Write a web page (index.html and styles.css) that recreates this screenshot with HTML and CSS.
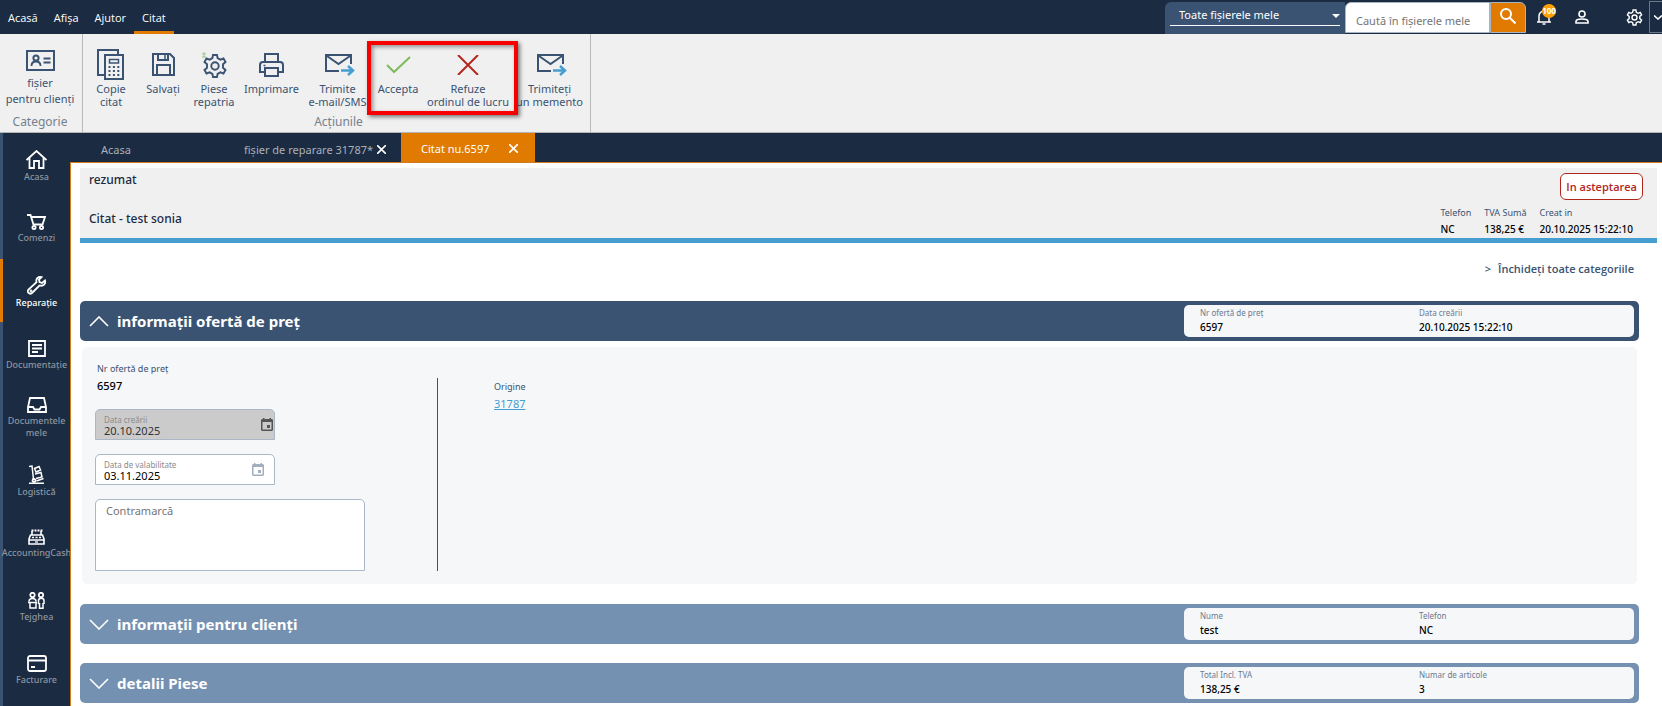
FILE: index.html
```html
<!DOCTYPE html>
<html lang="ro">
<head>
    <meta charset="UTF-8">
    <meta name="viewport" content="width=device-width, initial-scale=1.0">
    <title>Citat nu.6597</title>
    <link rel="stylesheet" href="styles.css">
</head>
<body>

<header class="topbar">
    <nav class="menu">
        <a href="#">Acasă</a>
        <a href="#">Afişa</a>
        <a href="#">Ajutor</a>
        <a href="#" class="current">Citat</a>
    </nav>
    <form class="search">
        <div class="scope">
            <select aria-label="Domeniu">
                <option>Toate fişierele mele</option>
            </select>
            <svg width="8" height="4" viewBox="0 0 8 4"><path d="M0 0h8l-4 4z" fill="#fff"/></svg>
        </div>
        <input class="searchText" type="text" placeholder="Caută în fişierele mele" aria-label="Caută">
        <button class="searchButton" type="button" aria-label="Caută">
            <svg width="18" height="18" viewBox="0 0 18 18" fill="none" stroke="#fff" stroke-width="2"><circle cx="7" cy="7" r="5"/><path d="M10.500 10.500l6 6"/></svg>
        </button>
    </form>
    <div class="tools">
        <button type="button" class="bell" aria-label="Notificări">
            <svg width="16" height="18" viewBox="0 0 16 18" fill="none" stroke="#fff" stroke-width="1.500"><path d="M1 14h14M3 14V8a5 5 0 0 1 10 0v6M8 3V1M6.500 16h3"/></svg>
            <span class="badge">100</span>
        </button>
        <button type="button" class="user" aria-label="Cont">
            <svg width="14" height="14" viewBox="0 0 14 14" fill="none" stroke="#fff" stroke-width="1.600"><circle cx="7" cy="4" r="3"/><path d="M1 13v-1.500C1 10 4 9 7 9s6 1 6 2.500V13z"/></svg>
        </button>
        <button type="button" class="gear" aria-label="Setări">
            <svg width="17" height="17" viewBox="0 0 24 24" fill="none" stroke="#fff" stroke-width="2"><circle cx="12" cy="12" r="3.500"/><path d="M10 1.500h4l.6 3.200 2.400 1.400 3-1.200 2 3.500-2.500 2.100v3l2.500 2.100-2 3.500-3-1.200-2.400 1.400-.6 3.200h-4l-.6-3.200L7 17.900l-3 1.200-2-3.500 2.500-2.100v-3L2 8.400l2-3.500 3 1.200 2.400-1.400z"/></svg>
        </button>
        <button type="button" class="more" aria-label="Mai mult">
            <svg width="8" height="5" viewBox="0 0 8 5" fill="none" stroke="#fff" stroke-width="1.600"><path d="M0 .5l4 3.500 4-3.500"/></svg>
        </button>
    </div>
</header>

<section class="ribbon">
    <div class="group categoryGroup">
        <button type="button" class="action">
            <svg width="29" height="21" viewBox="0 0 29 21" fill="none" stroke="#3a5372" stroke-width="2"><path d="M1 1h27v19H1z"/><circle cx="10" cy="8" r="2.600"/><path d="M5.500 16c0-3 1.500-4.500 4.500-4.500s4.500 1.500 4.500 4.500M17.500 8.500h7M17.500 12.500h7" stroke-width="1.800"/></svg>
            <span>fişier<br>pentru clienţi</span>
        </button>
        <div class="groupName">Categorie</div>
    </div>
    <div class="group actionsGroup">
        <div class="actions">
            <button type="button" class="action">
                <svg width="28" height="31" viewBox="0 0 28 31" fill="none" stroke="#3a5372" stroke-width="2"><path d="M7 26H1V1h20v4M8 6h18v24H8z"/><path d="M12.500 10.500h9v3.500h-9z" stroke-width="1.500"/><path d="M11.500 18h11M11.500 22h11M11.500 26h11" stroke-dasharray="2 2.400"/></svg>
                <span>Copie<br>citat</span>
            </button>
            <button type="button" class="action">
                <svg width="23" height="23" viewBox="0 0 23 23" fill="none" stroke="#3a5372" stroke-width="2"><path d="M1 1h17l4 4v17H1zM6 1v6h10V1M5 22V12h13v10"/><path d="M13 2v4" stroke-width="1.500"/></svg>
                <span>Salvaţi</span>
            </button>
            <button type="button" class="action">
                <svg width="26" height="26" viewBox="0 0 26 26" fill="none" stroke="#3a5372" stroke-width="1.900"><circle cx="14" cy="14" r="3.700"/><path d="M12 3h4l.6 3.200 2.700 1.500 3.200-1.200 2 3.500-2.500 2.200v3.600l2.500 2.200-2 3.500-3.200-1.200-2.700 1.500L16 25h-4l-.6-3.200-2.700-1.500-3.200 1.200-2-3.500L6 15.800v-3.600L3.500 10l2-3.500 3.200 1.200 2.700-1.500z"/><path d="M3 5V1M1 2.500L3 .7l2 1.800M1 5h4" stroke="#8cc67c" stroke-width="1"/></svg>
                <span>Piese<br>repatria</span>
            </button>
            <button type="button" class="action">
                <svg width="25" height="24" viewBox="0 0 25 24" fill="none" stroke="#3a5372" stroke-width="2"><path d="M6 9V1h13v8M6 19H1v-7c0-2 1-3 3-3h17c2 0 3 1 3 3v7h-5M6 15h13v8H6z"/><path d="M4.500 12.500h2" stroke-width="1.500"/></svg>
                <span>Imprimare</span>
            </button>
            <button type="button" class="action">
                <svg width="34" height="22" viewBox="-4 0 34 22" fill="none" stroke="#3a5372" stroke-width="2"><path d="M14 17H1V1h25v9M2 2l11.500 8L25 2"/><path d="M16 16.500h11M23 12l5 4.500-5 4.500" stroke="#469dcf" stroke-width="2.500"/></svg>
                <span>Trimite<br>e-mail/SMS</span>
            </button>
            <button type="button" class="action">
                <svg width="25" height="18" viewBox="0 0 25 18" fill="none" stroke="#7fba5c" stroke-width="2"><path d="M1 9l7 7L24 1"/></svg>
                <span>Accepta</span>
            </button>
            <button type="button" class="action">
                <svg width="22" height="20" viewBox="0 0 22 20" fill="none" stroke="#b3261e" stroke-width="2"><path d="M1 0l20 20M21 0L1 20"/></svg>
                <span>Refuze<br>ordinul de lucru</span>
            </button>
            <button type="button" class="action">
                <svg width="34" height="22" viewBox="-4 0 34 22" fill="none" stroke="#3a5372" stroke-width="2"><path d="M14 17H1V1h25v9M2 2l11.500 8L25 2"/><path d="M16 16.500h11M23 12l5 4.500-5 4.500" stroke="#469dcf" stroke-width="2.500"/></svg>
                <span>Trimiteţi<br>un memento</span>
            </button>
        </div>
        <div class="groupName">Acţiunile</div>
        <div class="highlight"></div>
    </div>
</section>

<div class="workspace">
    <nav class="sidebar">
        <a href="#">
            <svg width="21" height="19" viewBox="0 0 21 19"><path d="M.5 10l10-9 10 9M3.500 8v10h4.500v-7h5v7h4.500V8"/></svg>
            Acasa
        </a>
        <a href="#">
            <svg width="19" height="16" viewBox="0 0 19 16"><path d="M0 1h3.500l3 9.500h9L18 3H4.500"/><circle cx="7" cy="13.500" r="1.600"/><circle cx="14.500" cy="13.500" r="1.600"/></svg>
            Comenzi
        </a>
        <a href="#" class="current">
            <svg width="20" height="19" viewBox="0 0 20 19"><path d="M18 4.500l-3 2.500-2.500-1-.5-2.500 2.500-2.300c-3-1-6 1.500-5 5L1.500 13.500c-2 2.500 1 5.500 3.500 3.500L12.500 9.500c4 1 6.500-1.500 5.500-5z"/><circle cx="4" cy="15" r=".5"/></svg>
            Reparaţie
        </a>
        <a href="#">
            <svg width="18" height="17" viewBox="0 0 18 17"><path d="M1 1h16v15H1zM4 5h10M4 8.500h10M4 12h6"/></svg>
            Documentaţie
        </a>
        <a href="#">
            <svg width="20" height="16" viewBox="0 0 20 16"><path d="M1 15V10L3 1h14l2 9v5zM1 10h5l1.500 2.500h5L14 10h5"/></svg>
            Documentele<br>mele
        </a>
        <a href="#">
            <svg width="16" height="19" viewBox="0 0 16 19"><path d="M0 1.500l3-.5 1.500 13M5.500 3.500l4.500-2 1.500 3.500L7 7zM6 9l6-1.500 1 4.500-6 1.500M7.500 16l7-2.500M0 18.200h15" stroke-width="1.500"/><circle cx="5" cy="15.500" r="1.500"/></svg>
            Logistică
        </a>
        <a href="#">
            <svg width="17" height="16" viewBox="0 0 17 16"><path d="M4 6V2M13 6V2M2.500 6h12L16 10v5H1v-5zM1 11h15" stroke-width="1.600"/><path d="M3.500 1.500h11" stroke-dasharray="2 1"/><path d="M4 8.500h10" stroke-width="1.300" stroke-dasharray="2 1.500"/><path d="M7 13h3" stroke-width="1.300"/></svg>
            AccountingCash
        </a>
        <a href="#">
            <svg width="17" height="17" viewBox="0 0 17 17"><circle cx="4.500" cy="3" r="2.200"/><circle cx="13" cy="3" r="2.200"/><path d="M1 9.500C1 7 2.500 6.500 4.500 6.500S8 7 8 9.500M0 10.500h9M2 11v5h6v-5M10.500 12V8.500c0-3 5.500-3 5.500 0V12M11.500 11v5.200h3.500V11" stroke-width="1.500"/></svg>
            Tejghea
        </a>
        <a href="#">
            <svg width="20" height="17" viewBox="0 0 20 17"><rect x="1" y="1" width="18" height="15" rx="2"/><path d="M1 5.500h18M4 12h4"/></svg>
            Facturare
        </a>
    </nav>

    <div class="main">
        <div class="tabs">
            <div class="tab homeTab"><button type="button">Acasa</button></div>
            <div class="tab fileTab">
                <button type="button">fişier de reparare 31787*</button>
                <button type="button" aria-label="Închide"><svg width="9" height="9" viewBox="0 0 9 9"><path d="M0 0l9 9M9 0L0 9"/></svg></button>
            </div>
            <div class="tab quoteTab">
                <button type="button">Citat nu.6597</button>
                <button type="button" aria-label="Închide"><svg width="9" height="9" viewBox="0 0 9 9"><path d="M0 0l9 9M9 0L0 9"/></svg></button>
            </div>
        </div>

        <main class="content">
            <section class="summary">
                <div class="summaryTitles">
                    <h1>rezumat</h1>
                    <h2>Citat - test sonia</h2>
                </div>
                <div class="summaryInfo">
                    <div class="status">In asteptarea</div>
                    <dl class="facts">
                        <div><dt>Telefon</dt><dd>NC</dd></div>
                        <div><dt>TVA Sumă</dt><dd>138,25 €</dd></div>
                        <div><dt>Creat in</dt><dd>20.10.2025 15:22:10</dd></div>
                    </dl>
                </div>
            </section>

            <div class="closeAll"><a href="#"><span>&gt;</span>Închideţi toate categoriile</a></div>

            <div class="section">
                <div class="sectionBar open">
                    <button type="button">
                        <svg width="20" height="11" viewBox="0 0 20 11"><path d="M1 10l9-9 9 9"/></svg>
                        informaţii ofertă de preţ
                    </button>
                    <dl class="sectionInfo">
                        <div><dt>Nr ofertă de preţ</dt><dd>6597</dd></div>
                        <div><dt>Data creării</dt><dd>20.10.2025 15:22:10</dd></div>
                    </dl>
                </div>
                <div class="panel">
                    <div class="panelForm">
                        <div class="pair">
                            <span>Nr ofertă de preţ</span>
                            <b>6597</b>
                        </div>
                        <div class="field disabled">
                            <div>
                                <label for="created">Data creării</label>
                                <input type="text" id="created" value="20.10.2025" disabled>
                            </div>
                            <svg width="12" height="13" viewBox="0 0 12 13"><path fill-rule="evenodd" d="M2 0h1.500v1h5V0H10v1h1l1 1v10l-1 1H1l-1-1V2l1-1h1zM1.500 4v7.500h9V4zM6 7h3v3H6z"/></svg>
                        </div>
                        <div class="field">
                            <div>
                                <label for="valid">Data de valabilitate</label>
                                <input type="text" id="valid" value="03.11.2025">
                            </div>
                            <svg width="12" height="13" viewBox="0 0 12 13"><path fill-rule="evenodd" d="M2 0h1.500v1h5V0H10v1h1l1 1v10l-1 1H1l-1-1V2l1-1h1zM1.500 4v7.500h9V4zM6 7h3v3H6z"/></svg>
                        </div>
                        <textarea placeholder="Contramarcă" aria-label="Contramarcă"></textarea>
                    </div>
                    <div class="origin">
                        <div class="pair">
                            <span>Origine</span>
                            <a href="#">31787</a>
                        </div>
                    </div>
                </div>
            </div>

            <div class="section">
                <div class="sectionBar">
                    <button type="button">
                        <svg width="20" height="11" viewBox="0 0 20 11"><path d="M1 1l9 9 9-9"/></svg>
                        informaţii pentru clienţi
                    </button>
                    <dl class="sectionInfo">
                        <div><dt>Nume</dt><dd>test</dd></div>
                        <div><dt>Telefon</dt><dd>NC</dd></div>
                    </dl>
                </div>
            </div>

            <div class="section">
                <div class="sectionBar">
                    <button type="button">
                        <svg width="20" height="11" viewBox="0 0 20 11"><path d="M1 1l9 9 9-9"/></svg>
                        detalii Piese
                    </button>
                    <dl class="sectionInfo">
                        <div><dt>Total Incl. TVA</dt><dd>138,25 €</dd></div>
                        <div><dt>Numar de articole</dt><dd>3</dd></div>
                    </dl>
                </div>
            </div>
        </main>
    </div>
</div>

</body>
</html>
```
FILE: styles.css
```css
*{
    box-sizing: border-box;
}
body{
    margin: 0;
    min-height: 100vh;
    display: flex;
    flex-direction: column;
    font-family: "Noto Sans", "Open Sans", sans-serif;
    font-size: 11px;
    color: #1b2b41;
    background: #fff;
}
button, input, select, textarea{
    font: inherit;
    color: inherit;
    margin: 0;
    padding: 0;
    border: 0;
    background: none;
}
a{
    color: inherit;
    text-decoration: none;
}
dl, dd, h1, h2{
    margin: 0;
}

/* top bar */
.topbar{
    display: flex;
    justify-content: space-between;
    height: 34px;
    background: #1b2b41;
    color: #fff;
}
.menu{
    display: flex;
    font-family: "Open Sans", sans-serif;
}
.menu a{
    padding: 0 8px;
    line-height: 36px;
    font-weight: 500;
}
.menu .current{
    border-bottom: 3px solid #e17a00;
}
.search{
    display: flex;
    margin-left: auto;
    padding-top: 2px;
}
.scope{
    display: flex;
    align-items: center;
    width: 180px;
    padding: 0 5px 8px;
    border-radius: 6px 0 0 0;
    background: #3a5372;
}
.scope select{
    flex: 1;
    height: 24px;
    padding-left: 9px;
    padding-top: 2px;
    appearance: none;
    border-bottom: 1px solid #fff;
}
.scope svg{
    margin: 3px 0 0 -8px;
}
.searchText{
    width: 145px;
    height: 31px;
    padding: 6px 0 0 10px;
    border: 1px solid #a9b4c2;
    border-radius: 6px 0 0 0;
    background: #fff;
    color: #1b2b41;
}
.searchText::placeholder{
    color: #757575;
}
.searchButton{
    width: 36px;
    height: 31px;
    border: 1px solid #a9b4c2;
    border-radius: 0 6px 0 0;
    background: #e17a00;
}
.tools{
    display: flex;
    align-items: center;
    gap: 23px;
    padding-left: 10px;
}
.tools button{
    display: flex;
}
.bell{
    position: relative;
}
.badge{
    position: absolute;
    left: 6px;
    top: -4px;
    width: 14px;
    height: 14px;
    border-radius: 50%;
    background: #ffa000;
    font-size: 8px;
    font-weight: 700;
    line-height: 14px;
    display: flex;
    justify-content: center;
}
.gear{
    margin-left: 14px;
}
.tools .more{
    align-items: center;
    width: 13px;
    height: 32px;
    margin-left: -17px;
    padding-left: 4px;
    border: 1px solid #6b7686;
    border-right: 0;
}

/* ribbon */
.ribbon{
    display: flex;
    height: 99px;
    border-bottom: 1px solid #b5b5b5;
    background: #f0f0f0;
    color: #3a5372;
}
.group{
    position: relative;
    display: flex;
    flex-direction: column;
    justify-content: space-between;
    padding: 11px 0 1px;
    border-right: 1px solid #b9b9b9;
}
.categoryGroup{
    width: 83px;
    padding-right: 2px;
}
.actionsGroup{
    padding-left: 4px;
}
.actions{
    display: grid;
    grid-template-columns: 48px 56px 46px 69px 63px 58px 82px 81px;
}
.action{
    display: flex;
    flex-direction: column;
    align-items: center;
    line-height: 13px;
    white-space: nowrap;
}
.actions .action{
    display: grid;
    grid-template-rows: 37px 26px;
    justify-items: center;
    align-items: center;
}
.actions svg{
    margin-top: 2px;
}
.actions span{
    align-self: start;
}
.categoryGroup .action{
    padding-top: 5px;
    gap: 4px;
    line-height: 16px;
}
.groupName{
    color: #75808e;
    font-size: 12px;
    line-height: 18px;
    text-align: center;
}
.highlight{
    position: absolute;
    left: 284px;
    top: 7px;
    width: 151px;
    height: 74px;
    border: 4px solid #f90000;
    box-shadow: 2px 2px 4px rgba(0, 0, 0, 0.5), inset 2px 2px 4px rgba(0, 0, 0, 0.4);
    pointer-events: none;
}

/* sidebar */
.workspace{
    flex: 1;
    display: flex;
    background: #1b2b41;
}
.sidebar{
    flex: 0 0 70px;
    width: 70px;
    background: linear-gradient(90deg, #3a5372 3px, transparent 3px);
}
.sidebar a{
    display: flex;
    flex-direction: column;
    align-items: center;
    justify-content: center;
    height: 63px;
    padding-top: 3px;
    border-left: 3px solid #3a5372;
    color: #8d95a0;
    font-size: 9px;
    font-weight: 500;
    line-height: 12px;
    text-align: center;
}
.sidebar svg{
    margin-bottom: 2px;
    fill: none;
    stroke: #fff;
    stroke-width: 1.800;
}
.sidebar .current{
    border-color: #e17a00;
    color: #fff;
}

/* tabs */
.main{
    flex: 1;
    display: flex;
    flex-direction: column;
    min-width: 0;
}
.tabs{
    display: flex;
    height: 29px;
    color: #a9b1bb;
}
.tab{
    display: flex;
    align-items: center;
    justify-content: space-between;
    padding-top: 4px;
}
.tab svg{
    display: block;
    stroke: #fff;
    stroke-width: 1.600;
}
.homeTab{
    width: 153px;
    padding-left: 31px;
}
.fileTab{
    width: 178px;
    padding-left: 21px;
    padding-right: 15px;
}
.quoteTab{
    width: 134px;
    padding: 2px 17px 0 20px;
    background: #e17a00;
    color: #fff;
}

/* page */
.content{
    flex: 1;
    padding: 5px 5px 0 9px;
    border-top: 1px solid #cf7d1c;
    border-left: 1px solid #cf7d1c;
    background: #fff;
}
.summary{
    display: flex;
    justify-content: space-between;
    height: 75px;
    border-bottom: 5px solid #469dcf;
    background: #f0f0f0;
}
.summaryTitles{
    padding-left: 9px;
}
.summary h1, .summary h2{
    font-size: 12px;
    font-weight: 500;
    line-height: 24px;
}
.summary h2{
    margin-top: 15px;
}
.summaryInfo{
    display: flex;
    flex-direction: column;
    align-items: flex-end;
    padding: 5px 14px 0 0;
}
.status{
    padding: 0 5px;
    border: 1px solid #b3261e;
    border-radius: 6px;
    background: #fff;
    color: #b3261e;
    font-family: "Open Sans", sans-serif;
    font-weight: 600;
    line-height: 25px;
}
.facts{
    display: flex;
    gap: 13px;
    padding: 4px 10px 0 0;
    line-height: 17px;
}
.facts dt, .pair span{
    color: #3a5372;
    font-size: 9px;
}
.facts dd, .sectionInfo dd, .pair b{
    color: #000;
    font-size: 10px;
    font-weight: 500;
}
.closeAll{
    display: flex;
    justify-content: flex-end;
    padding: 16px 23px 0 0;
    color: #3a5372;
    font-family: "Open Sans", sans-serif;
    font-weight: 600;
    line-height: 20px;
}
.closeAll span{
    margin-right: 7px;
}

/* sections */
.section{
    padding: 0 18px 19px 0;
}
.closeAll + .section{
    padding-top: 22px;
    padding-bottom: 20px;
}
.sectionBar{
    display: flex;
    justify-content: space-between;
    height: 40px;
    padding: 4px 5px 4px 4px;
    border-radius: 5px;
    background: #7591b2;
    color: #fff;
}
.sectionBar.open{
    background: #3a5372;
}
.sectionBar button{
    display: flex;
    align-items: center;
    gap: 8px;
    padding-left: 5px;
    font-size: 15px;
    font-weight: 700;
}
.sectionBar svg{
    fill: none;
    stroke: #fff;
    stroke-width: 1.600;
}
.sectionInfo{
    display: flex;
    width: 450px;
    padding: 1px 0 1px 16px;
    border-radius: 5px;
    background: #f5f7f9;
    line-height: 14px;
}
.sectionInfo div{
    flex: 0 0 219px;
}
.sectionInfo dt{
    color: #6b7a90;
    font-size: 8px;
}
.panel{
    display: flex;
    margin: 6px 2px 0;
    padding: 13px;
    border-radius: 5px;
    background: #f5f7f9;
}
.panelForm{
    display: flex;
    flex-direction: column;
    gap: 14px;
    width: 342px;
}
.pair{
    display: flex;
    flex-direction: column;
    padding: 0 0 1px 2px;
    line-height: 17px;
}
.pair b, .pair a{
    font-size: 11px;
}
.pair a{
    color: #469dcf;
    text-decoration: underline;
}
.field{
    display: flex;
    align-items: center;
    justify-content: space-between;
    width: 180px;
    height: 31px;
    padding: 3px 10px 0 8px;
    border: 1px solid #a9b7c6;
    border-radius: 5px 5px 0 0;
    background: #fff;
    color: #000;
}
.field div{
    display: flex;
    flex-direction: column;
}
.field label{
    color: #8b8b8b;
    font-size: 8px;
    line-height: 10px;
}
.field input{
    width: 120px;
    height: 12px;
    font-size: 11px;
    line-height: 12px;
}
.field svg{
    margin-bottom: 3px;
    fill: #a3afbf;
}
.field.disabled{
    padding-right: 1px;
    background: #cbcbcb;
    color: #333;
}
.field.disabled svg{
    fill: #555;
}
.panelForm textarea{
    width: 270px;
    height: 72px;
    padding: 3px 10px;
    border: 1px solid #a9b7c6;
    border-radius: 5px 5px 0 0;
    background: #fff;
    resize: none;
}
.panelForm textarea::placeholder{
    color: #757575;
}
.origin{
    margin-top: 18px;
    padding-left: 54px;
    border-left: 1px solid #3a5372;
}
```
